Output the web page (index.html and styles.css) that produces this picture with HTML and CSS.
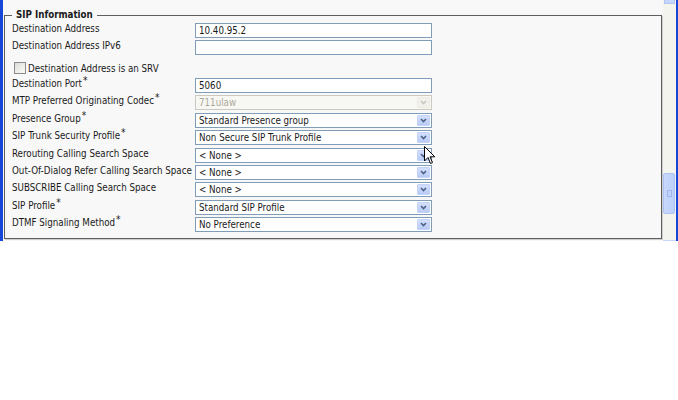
FILE: index.html
```html
<!DOCTYPE html>
<html lang="en">
<head>
    <meta charset="UTF-8">
    <title>SIP Information</title>
    <link rel="stylesheet" href="styles.css">
</head>
<body>
    <div class="window">
        <div class="viewport">
            <fieldset class="section">
                <legend>SIP Information</legend>
                <div class="fields">
                    <label class="label">Destination Address</label>
                    <div class="input">10.40.95.2</div>

                    <label class="label">Destination Address IPv6</label>
                    <div class="input"></div>

                    <div class="check-row">
                        <span class="checkbox"></span>
                        <span>Destination Address is an SRV</span>
                    </div>

                    <label class="label">Destination Port<span class="req">*</span></label>
                    <div class="input">5060</div>

                    <label class="label">MTP Preferred Originating Codec<span class="req">*</span></label>
                    <div class="select disabled">
                        <span class="value">711ulaw</span>
                        <span class="drop"><svg width="7" height="5" viewBox="0 0 7 5"><path d="M1 1 L3.5 3.5 L6 1" /></svg></span>
                    </div>

                    <label class="label">Presence Group<span class="req">*</span></label>
                    <div class="select">
                        <span class="value">Standard Presence group</span>
                        <span class="drop"><svg width="7" height="5" viewBox="0 0 7 5"><path d="M1 1 L3.5 3.5 L6 1" /></svg></span>
                    </div>

                    <label class="label">SIP Trunk Security Profile<span class="req">*</span></label>
                    <div class="select">
                        <span class="value">Non Secure SIP Trunk Profile</span>
                        <span class="drop"><svg width="7" height="5" viewBox="0 0 7 5"><path d="M1 1 L3.5 3.5 L6 1" /></svg></span>
                    </div>

                    <label class="label">Rerouting Calling Search Space</label>
                    <div class="select">
                        <span class="value">&lt; None &gt;</span>
                        <span class="drop"><svg width="7" height="5" viewBox="0 0 7 5"><path d="M1 1 L3.5 3.5 L6 1" /></svg></span>
                    </div>

                    <label class="label">Out-Of-Dialog Refer Calling Search Space</label>
                    <div class="select">
                        <span class="value">&lt; None &gt;</span>
                        <span class="drop"><svg width="7" height="5" viewBox="0 0 7 5"><path d="M1 1 L3.5 3.5 L6 1" /></svg></span>
                    </div>

                    <label class="label">SUBSCRIBE Calling Search Space</label>
                    <div class="select">
                        <span class="value">&lt; None &gt;</span>
                        <span class="drop"><svg width="7" height="5" viewBox="0 0 7 5"><path d="M1 1 L3.5 3.5 L6 1" /></svg></span>
                    </div>

                    <label class="label">SIP Profile<span class="req">*</span></label>
                    <div class="select">
                        <span class="value">Standard SIP Profile</span>
                        <span class="drop"><svg width="7" height="5" viewBox="0 0 7 5"><path d="M1 1 L3.5 3.5 L6 1" /></svg></span>
                    </div>

                    <label class="label">DTMF Signaling Method<span class="req">*</span></label>
                    <div class="select">
                        <span class="value">No Preference</span>
                        <span class="drop"><svg width="7" height="5" viewBox="0 0 7 5"><path d="M1 1 L3.5 3.5 L6 1" /></svg></span>
                    </div>
                </div>
            </fieldset>
        </div>
        <div class="scrollbar">
            <div class="arrow-up"></div>
            <div class="track">
                <div class="thumb"><span class="grip"></span></div>
            </div>
            <div class="arrow-down"></div>
        </div>
    </div>

    <!-- mouse pointer over the security profile dropdown -->
    <svg class="pointer" width="12" height="19" viewBox="0 0 12 19">
        <path d="M0.5 0.5 L0.5 15 L4 11.5 L6.5 17.5 L8.5 16.6 L6 10.8 L10.8 10.8 Z" />
    </svg>
</body>
</html>
```

FILE: styles.css
```css
* {
    box-sizing: border-box;
}
body {
    margin: 0;
    background-color: white;
    font-family: "DejaVu Sans Condensed", "DejaVu Sans", sans-serif;
    font-stretch: condensed;
    font-size: 9.7px;
    color: #1a1a1a;
}
.window {
    display: flex;
    width: 678px;
    height: 241px;
    border-left: 3px solid #1846d6;
    border-right: 2px solid #1846d6;
}
.viewport {
    flex: 1;
    padding: 9px 1px 0 1px;
    background-color: #f8f8f8;
}
.section {
    margin: 0;
    padding: 2px 6px 6px 7px;
    border: 1px solid #5e5e5e;
    box-shadow: 1px 1px 0 #cfcfcf;
}
.section legend {
    padding: 0 4px;
    line-height: 12px;
    font-weight: bold;
}
.fields {
    display: grid;
    grid-template-columns: 183px 237px;
    grid-auto-rows: minmax(15px, auto);
    row-gap: 2.4px;
}
.label {
    display: flex;
    align-items: center;
    padding-bottom: 4px;
    white-space: nowrap;
}
.req {
    font-size: 10px;
    position: relative;
    top: -3px;
    margin-left: 1px;
}
.input {
    height: 15px;
    border: 1px solid #7f9db9;
    background-color: white;
    padding: 0 3px;
    line-height: 13px;
}
.check-row {
    grid-column: 1 / 3;
    height: 17.8px;
    display: flex;
    align-items: center;
    gap: 2px;
    padding: 3px 0 0 2px;
}
.checkbox {
    width: 12px;
    height: 12px;
    border: 1px solid #8b8b8b;
    background: linear-gradient(135deg, #dcdcd7, #fbfbf9);
}
.select {
    display: flex;
    height: 15px;
    border: 1px solid #7f9db9;
    background-color: white;
    padding: 1px;
}
.select .value {
    flex: 1;
    padding-left: 2px;
    line-height: 11px;
}
.select .drop {
    width: 13px;
    display: flex;
    align-items: center;
    justify-content: center;
    background: linear-gradient(#d3dffd, #b9cbf6);
    border: 1px solid #c3d3f8;
    border-radius: 1px;
}
.select .drop path {
    fill: none;
    stroke: #4d6185;
    stroke-width: 1.6;
}
.select.disabled {
    border-color: #cbc9c0;
    background-color: #f7f7f3;
}
.select.disabled .value {
    color: #aca899;
}
.select.disabled .drop {
    background: #f1f0ea;
    border-color: #eceae2;
}
.select.disabled .drop path {
    stroke: #c9c7ba;
}
.scrollbar {
    width: 13px;
    display: flex;
    flex-direction: column;
    background-color: #f4f4ef;
}
.arrow-up {
    height: 4px;
    margin: 0 1px;
    background-color: #c5d5fb;
    border: 1px solid #b3c5f1;
    border-top: none;
}
.track {
    flex: 1;
    padding-top: 169px;
}
.thumb {
    height: 41px;
    margin: 0 1px 0 0;
    background: linear-gradient(90deg, #c8d8fc, #bcd0fa);
    border: 1px solid #aec3f3;
    border-radius: 2px;
    display: flex;
    align-items: center;
    justify-content: center;
}
.grip {
    width: 5px;
    height: 7px;
    border: 1px solid #9fb5ec;
}
.arrow-down {
    height: 1px;
    background-color: #c5d5fb;
}
.pointer {
    position: absolute;
    left: 424px;
    top: 146px;
}
.pointer path {
    fill: white;
    stroke: black;
    stroke-width: 1;
}
```
